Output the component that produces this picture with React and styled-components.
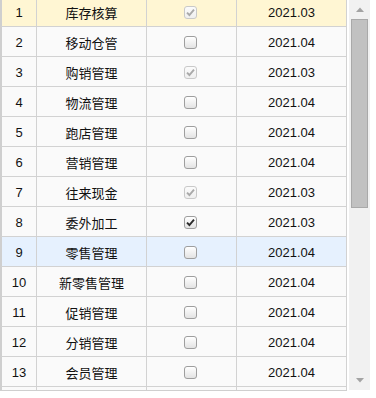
import React from "react";
import styled, { createGlobalStyle } from "styled-components";

const rows = [
	{ no: 1, name: "库存核算", state: "lock", date: "2021.03", tone: "active" },
	{ no: 2, name: "移动仓管", state: "off", date: "2021.04" },
	{ no: 3, name: "购销管理", state: "lock", date: "2021.03" },
	{ no: 4, name: "物流管理", state: "off", date: "2021.04" },
	{ no: 5, name: "跑店管理", state: "off", date: "2021.04" },
	{ no: 6, name: "营销管理", state: "off", date: "2021.04" },
	{ no: 7, name: "往来现金", state: "lock", date: "2021.03" },
	{ no: 8, name: "委外加工", state: "on", date: "2021.03" },
	{ no: 9, name: "零售管理", state: "off", date: "2021.04", tone: "hover" },
	{ no: 10, name: "新零售管理", state: "off", date: "2021.04" },
	{ no: 11, name: "促销管理", state: "off", date: "2021.04" },
	{ no: 12, name: "分销管理", state: "off", date: "2021.04" },
	{ no: 13, name: "会员管理", state: "off", date: "2021.04" },
];

export default function App() {
	return (
		<>
			<GlobalStyle />
			<Wrapper>
				<TablePane>
					<Body>
						{rows.map((r) => (
							<Row key={r.no} tone={r.tone}>
								<Cell>{r.no}</Cell>
								<Cell>{r.name}</Cell>
								<Cell>
									<CheckBox state={r.state}>
										{r.state !== "off" && (
											<svg width="9" height="9" viewBox="0 0 9 9">
												<path
													d="M1 4.6 L3.4 7 L8 1.6"
													fill="none"
													stroke={r.state === "on" ? "#2b2b2b" : "#a9a9a9"}
													strokeWidth="1.9"
												/>
											</svg>
										)}
									</CheckBox>
								</Cell>
								<Cell>{r.date}</Cell>
							</Row>
						))}
						{/* next row, only its edge shows under the fold */}
						<Row>
							<Cell />
							<Cell />
							<Cell />
							<Cell />
						</Row>
					</Body>
				</TablePane>
				<ScrollBar>
					<Arrow>
						<svg width="8" height="5" viewBox="0 0 8 5">
							<path d="M0 5 L4 0.5 L8 5 Z" fill="#a3a3a3" />
						</svg>
					</Arrow>
					<Track>
						<Thumb />
					</Track>
					<Arrow>
						<svg width="8" height="5" viewBox="0 0 8 5">
							<path d="M0 0 L4 4.5 L8 0 Z" fill="#a3a3a3" />
						</svg>
					</Arrow>
				</ScrollBar>
			</Wrapper>
		</>
	);
}

const GlobalStyle = createGlobalStyle`
	html, body {
		margin: 0;
		padding: 0;
		background: #ffffff;
	}
	body {
		font-family: "Liberation Sans", "Noto Sans CJK SC", sans-serif;
		font-size: 13px;
		color: #111111;
	}
`;

const Wrapper = styled.div`
	display: flex;
	align-items: flex-start;
	width: 371px;
	height: 391px;
`;

const TablePane = styled.div`
	width: 346px;
	height: 390px;
	border-left: 1px solid #cfcfcf;
	border-bottom: 1px solid #cfcfcf;
	overflow: hidden;
`;

const Body = styled.div`
	margin-top: -3px;
`;

const Row = styled.div`
	display: grid;
	grid-template-columns: 35px 110px 90px 110px;
	height: 30px;
	box-sizing: border-box;
	border-left: 1px solid #cfcfcf;
	border-bottom: 1px solid #d2d2d2;
	background: ${(p) =>
		p.tone === "active" ? "#fff6d3" : p.tone === "hover" ? "#e6f1fe" : "#fafafa"};
`;

const Cell = styled.div`
	display: flex;
	align-items: center;
	justify-content: center;
	box-sizing: border-box;
	border-right: 1px solid #d2d2d2;
	padding-top: 1px;
	white-space: nowrap;
`;

const CheckBox = styled.span`
	display: flex;
	align-items: center;
	justify-content: center;
	width: 13px;
	height: 13px;
	box-sizing: border-box;
	margin-left: -2px;
	border-radius: 3px;
	border: 1px solid ${(p) => (p.state === "lock" ? "#c9c9c9" : "#9e9e9e")};
	background: ${(p) =>
		p.state === "lock"
			? "linear-gradient(#fbfbfb, #efefef)"
			: "linear-gradient(#ffffff, #e3e3e3)"};
`;

const ScrollBar = styled.div`
	display: flex;
	flex-direction: column;
	width: 21px;
	height: 390px;
	margin-left: 2px;
	background: #f1f1f1;
`;

const Arrow = styled.div`
	display: flex;
	align-items: center;
	justify-content: center;
	height: 19px;
`;

const Track = styled.div`
	flex: 1;
	padding: 0 2px;
`;

const Thumb = styled.div`
	height: 189px;
	box-sizing: border-box;
	background: #c1c1c1;
	border: 1px solid #a9a9a9;
`;
